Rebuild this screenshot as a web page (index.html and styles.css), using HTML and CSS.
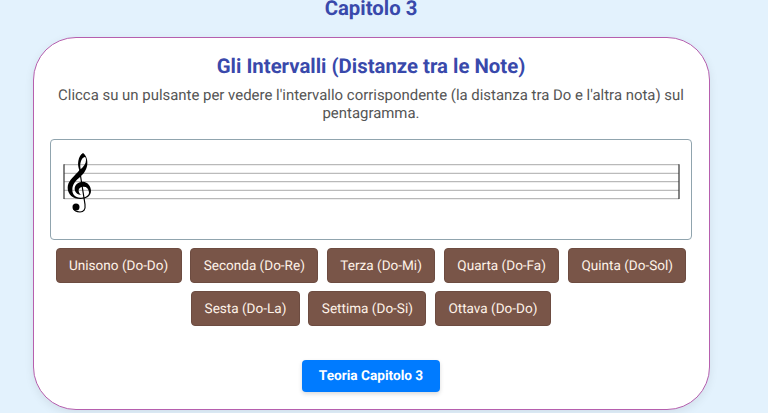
FILE: index.html
```html
<!DOCTYPE html>
<html lang="it">
  <head>
    <meta charset="UTF-8" />
    <meta name="viewport" content="width=device-width, initial-scale=1.0" />
    <title>Capitolo 3</title>
    <link rel="stylesheet" href="styles.css">
  </head>
  <body>
    <div class="page">
      <h1>Capitolo 3</h1>
      <section class="card">
        <h2>Gli Intervalli (Distanze tra le Note)</h2>
        <p>
          Clicca su un pulsante per vedere l'intervallo corrispondente (la
          distanza tra Do e l'altra nota) sul pentagramma.
        </p>
        <div class="staff">
          <svg viewBox="0 0 640 99" width="640" height="99">
            <!-- pentagramma -->
            <g class="lines">
              <path d="M13 24.7H628" />
              <path d="M13 33.3H628" />
              <path d="M13 41.7H628" />
              <path d="M13 50.3H628" />
              <path d="M13 58.7H628" />
            </g>
            <path class="bar" d="M13 24.3V59.1M628 24.3V59.1" />
            <!-- chiave di violino -->
            <g transform="translate(4 5) scale(0.3333)">
              <path fill-rule="evenodd" d="M84 24C92 30 98 42 97 56C96 72 88 84 76 95C62 107 53 116 52 132C51 148 60 157 76 158C92 159 102 152 102 142C101 131 95 125 86 125C76 125 70 131 71 138C72 144 75 148 80 150C68 149 59 142 59 131C59 119 70 110 84 110C98 111 108 123 108 138C108 153 94 162 76 162C54 162 38 148 38 128C38 110 54 97 68 82L73 76C70 66 68 58 70 48C72 36 77 28 84 24ZM89 36C81 38 75 50 76 66L77 73C86 65 93 56 93 46C93 40 92 36 89 36Z" />
              <path class="stem" d="M74 76L90 178C92 194 86 201 75 201C66 201 58 198 55 190" />
              <circle cx="63" cy="186" r="10.5" />
            </g>
          </svg>
        </div>
        <div class="buttons">
          <button>Unisono (Do-Do)</button>
          <button>Seconda (Do-Re)</button>
          <button>Terza (Do-Mi)</button>
          <button>Quarta (Do-Fa)</button>
          <button>Quinta (Do-Sol)</button>
          <button>Sesta (Do-La)</button>
          <button>Settima (Do-Si)</button>
          <button>Ottava (Do-Do)</button>
        </div>
        <a class="theory" href="#">Teoria Capitolo 3</a>
      </section>
    </div>
  </body>
</html>
```

FILE: styles.css
```css
* {
  box-sizing: border-box;
}

body {
  margin: 0;
  height: 413px;
  overflow: hidden;
  background-color: #e3f2fd;
  font-family: Roboto, sans-serif;
  text-rendering: geometricPrecision;
}

.page {
  width: 677px;
  margin-left: 32.5px;
  text-align: center;
}

h1,
h2 {
  margin: 0;
  font-size: 20.35px;
  font-weight: 700;
  line-height: 24px;
  color: #3949ab;
}

h1 {
  height: 20px;
  line-height: 16px;
  margin-bottom: 17.4px;
}

.card {
  height: 372.5px;
  padding: 15.7px 16.5px 0;
  background-color: #ffffff;
  border: 1px solid #b65fae;
  border-radius: 43px;
  box-shadow: 0 3px 10px rgba(0, 0, 0, 0.08);
  display: flex;
  flex-direction: column;
  align-items: center;
}

p {
  margin: 9px 0 17px;
  font-size: 14.93px;
  line-height: 17.6px;
  color: #555555;
}

.staff {
  width: 642px;
  height: 101px;
  flex-shrink: 0;
  border: 1px solid #90a4ae;
  border-radius: 4px;
}

.staff svg {
  display: block;
}

.lines path {
  stroke: #999999;
  stroke-width: 0.85;
}

.bar {
  fill: none;
  stroke: #333333;
  stroke-width: 1.2;
}

.stem {
  fill: none;
  stroke: #000000;
  stroke-width: 3.5;
}

.buttons {
  display: flex;
  flex-wrap: wrap;
  justify-content: center;
  gap: 8.5px;
  width: 642px;
  margin-top: 8px;
}

button {
  height: 34.5px;
  padding: 0 12.5px;
  font-family: inherit;
  font-size: 13.55px;
  text-rendering: inherit;
  color: #fff3e9;
  background-color: #795548;
  border: 1px solid #6d4c41;
  border-radius: 4px;
  cursor: pointer;
}

.theory {
  margin-top: 34px;
  padding: 0 17px;
  font-size: 13.65px;
  font-weight: 700;
  line-height: 32.5px;
  color: #ffffff;
  text-decoration: none;
  background-color: #007bff;
  border-radius: 4px;
  box-shadow: 0 2px 4px rgba(0, 0, 0, 0.15);
}
```
